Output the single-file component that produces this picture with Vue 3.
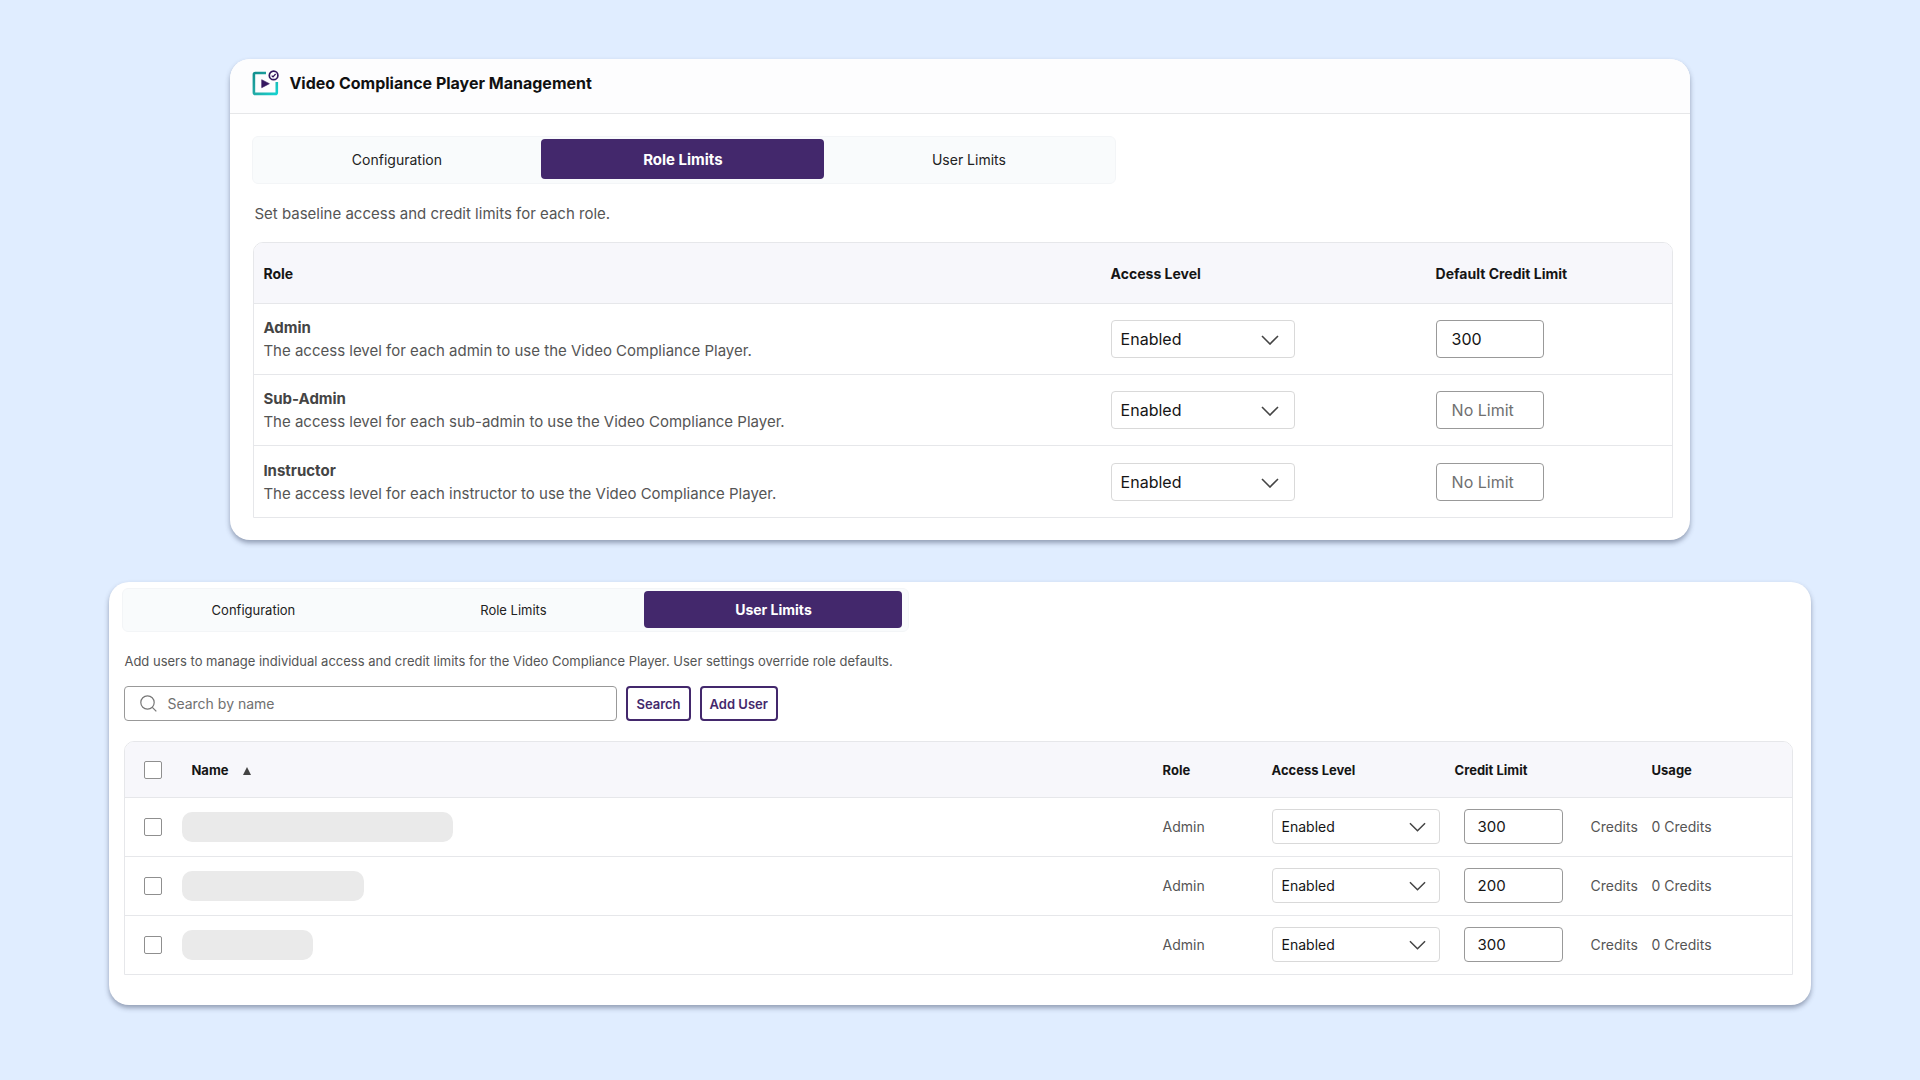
<script setup>
import { reactive, ref } from 'vue'

const tabs = ['Configuration', 'Role Limits', 'User Limits']
const accessOptions = ['Enabled', 'Disabled']

const roles = reactive([
  { name: 'Admin', noun: 'admin', access: 'Enabled', limit: '300' },
  { name: 'Sub-Admin', noun: 'sub-admin', access: 'Enabled', limit: '' },
  { name: 'Instructor', noun: 'instructor', access: 'Enabled', limit: '' },
])

const users = reactive([
  { id: 1, nameWidth: 271, role: 'Admin', access: 'Enabled', limit: '300', used: 0, selected: false },
  { id: 2, nameWidth: 182, role: 'Admin', access: 'Enabled', limit: '200', used: 0, selected: false },
  { id: 3, nameWidth: 131, role: 'Admin', access: 'Enabled', limit: '300', used: 0, selected: false },
])

const query = ref('')
const allSelected = ref(false)

function toggleAll() {
  users.forEach((user) => { user.selected = allSelected.value })
}
</script>

<template>
  <main class="page">
    <section class="panel role-panel">
      <header class="panel-header">
        <svg class="logo" viewBox="0 0 28 26" aria-hidden="true">
          <defs>
            <linearGradient id="frame" x1="0" y1="0" x2="1" y2="1">
              <stop offset="0" stop-color="#12908f" />
              <stop offset="0.5" stop-color="#22aaa6" />
              <stop offset="1" stop-color="#14d3d0" />
            </linearGradient>
          </defs>
          <path d="M14 3H3.3Q1.9 3 1.9 4.4V22.4Q1.9 23.9 3.3 23.9H23.4Q24.8 23.9 24.8 22.4V12" fill="none" stroke="url(#frame)" stroke-width="2.6" />
          <path d="M9.7 9.7V17.7L17.4 13.7Z" fill="#35185f" stroke="#35185f" stroke-width="0.6" stroke-linejoin="round" />
          <circle cx="21.6" cy="5.4" r="4.3" fill="#fff" stroke="#35185f" stroke-width="1.7" />
          <path d="M19.7 5.6L21 6.9L23.6 4" fill="none" stroke="#35185f" stroke-width="1.3" />
        </svg>
        <h1>Video Compliance Player Management</h1>
      </header>

      <div class="panel-body">
        <nav class="tabs" aria-label="Role limit sections">
          <button v-for="tab in tabs" :key="tab" type="button" class="tab" :class="{ active: tab === 'Role Limits' }">{{ tab }}</button>
        </nav>
        <p class="intro">Set baseline access and credit limits for each role.</p>

        <table class="grid">
          <colgroup>
            <col />
            <col class="col-access" />
            <col class="col-limit" />
          </colgroup>
          <thead>
            <tr>
              <th scope="col">Role</th>
              <th scope="col">Access Level</th>
              <th scope="col">Default Credit Limit</th>
            </tr>
          </thead>
          <tbody>
            <tr v-for="role in roles" :key="role.name">
              <td>
                <strong class="role-name">{{ role.name }}</strong>
                <span class="role-text">The access level for each {{ role.noun }} to use the Video Compliance Player.</span>
              </td>
              <td>
                <span class="select">
                  <select v-model="role.access" :aria-label="`${role.name} access level`">
                    <option v-for="option in accessOptions" :key="option">{{ option }}</option>
                  </select>
                  <svg class="chevron" viewBox="0 0 18 10" aria-hidden="true"><path d="M1 1L9 9L17 1" /></svg>
                </span>
              </td>
              <td>
                <input v-model="role.limit" class="limit" type="text" placeholder="No Limit" :aria-label="`${role.name} default credit limit`" />
              </td>
            </tr>
          </tbody>
        </table>
      </div>
    </section>

    <section class="panel user-panel">
      <nav class="tabs" aria-label="User limit sections">
        <button v-for="tab in tabs" :key="tab" type="button" class="tab" :class="{ active: tab === 'User Limits' }">{{ tab }}</button>
      </nav>
      <p class="intro">Add users to manage individual access and credit limits for the Video Compliance Player. User settings override role defaults.</p>

      <form class="toolbar" @submit.prevent>
        <label class="search">
          <svg viewBox="0 0 17 17" aria-hidden="true">
            <circle cx="7.5" cy="7.5" r="6.7" />
            <path d="M12.3 12.3L16.3 16.3" />
          </svg>
          <input v-model="query" type="text" placeholder="Search by name" aria-label="Search by name" />
        </label>
        <button type="submit" class="action">Search</button>
        <button type="button" class="action">Add User</button>
      </form>

      <table class="grid">
        <colgroup>
          <col class="col-check" />
          <col />
          <col class="col-role" />
          <col class="col-access" />
          <col class="col-limit" />
          <col class="col-usage" />
        </colgroup>
        <thead>
          <tr>
            <th scope="col" class="check"><input v-model="allSelected" type="checkbox" aria-label="Select all users" @change="toggleAll" /></th>
            <th scope="col" class="name-head">Name<svg class="sort" viewBox="0 0 8 8" aria-hidden="true"><path d="M4 0L8 8H0Z" /></svg></th>
            <th scope="col">Role</th>
            <th scope="col">Access Level</th>
            <th scope="col">Credit Limit</th>
            <th scope="col">Usage</th>
          </tr>
        </thead>
        <tbody>
          <tr v-for="user in users" :key="user.id">
            <td class="check"><input v-model="user.selected" type="checkbox" :aria-label="`Select user ${user.id}`" /></td>
            <td><span class="masked" :style="{ width: user.nameWidth + 'px' }"></span></td>
            <td class="value">{{ user.role }}</td>
            <td class="value">
              <span class="select">
                <select v-model="user.access" :aria-label="`User ${user.id} access level`">
                  <option v-for="option in accessOptions" :key="option">{{ option }}</option>
                </select>
                <svg class="chevron" viewBox="0 0 18 10" aria-hidden="true"><path d="M1 1L9 9L17 1" /></svg>
              </span>
            </td>
            <td class="value">
              <label class="credits"><input v-model="user.limit" class="limit" type="text" /><span>Credits</span></label>
            </td>
            <td class="value">{{ user.used }} Credits</td>
          </tr>
        </tbody>
      </table>
    </section>
  </main>
</template>

<style>
html {
  background: #e0edff;
}

body {
  margin: 0;
}
</style>

<style scoped>
.page,
.page * {
  box-sizing: border-box;
}

.page {
  display: flex;
  flex-direction: column;
  align-items: center;
  gap: 42px;
  min-height: 100vh;
  padding: 59px 0 48px;
  background: #e0edff;
  color: #555;
  font-family: Inter, "Liberation Sans", sans-serif;
}

.page button,
.page input,
.page select {
  margin: 0;
  font: inherit;
}

.panel {
  overflow: clip;
  border-radius: 20px;
  background: #fff;
  box-shadow: 0 3px 5px rgba(50, 62, 90, 0.45);
}

.role-panel {
  width: 76%;
  font-size: 15px;
}

.user-panel {
  width: 88.6%;
  padding: 6px 18px 30px 13px;
  font-size: 14px;
}

.panel-header {
  display: flex;
  align-items: center;
  gap: 9px;
  padding: 11px 22px 17px;
  border-bottom: 1px solid #e6e7e9;
  background: #fdfdfe;
}

.logo {
  width: 28px;
  height: 26px;
}

h1 {
  margin: 0;
  color: #111;
  font-size: 16px;
  font-weight: 700;
  line-height: 24px;
}

.panel-body {
  padding: 22px 17px 22px 22px;
}

.tabs {
  display: grid;
  grid-template-columns: repeat(3, 1fr);
  border: 1px solid #f3f5f7;
  border-radius: 6px;
  background: #f9fbfc;
}

.role-panel .tabs {
  gap: 3px;
  max-width: 864px;
  height: 48px;
  padding: 2px 5px 4px 2px;
}

.user-panel .tabs {
  gap: 2px;
  max-width: 787px;
  height: 44px;
  padding: 2px 6px 3px 1px;
}

.page .tab {
  padding: 0;
  border: 0;
  border-radius: 4px;
  background: transparent;
  color: #222;
}

.role-panel .tab {
  font-size: 14px;
}

.user-panel .tab {
  font-size: 13px;
}

.page .tab.active {
  background: #43286c;
  color: #fff;
  font-weight: 700;
}

.role-panel .tab.active {
  font-size: 15px;
}

.user-panel .tab.active {
  font-size: 14px;
}

.intro {
  margin: 20px 0 18px 2px;
  line-height: 20px;
}

.user-panel .intro {
  margin: 19px 0 15px 2px;
  font-size: 13px;
}

.grid {
  width: calc(100% - 2px);
  margin-left: 2px;
  table-layout: fixed;
  border: 1px solid #e6e7ea;
  border-spacing: 0;
  border-radius: 10px 10px 0 0;
}

.role-panel .grid {
  width: calc(100% - 1px);
  margin-left: 1px;
}

th,
td {
  padding: 0;
  border-bottom: 1px solid #e6e7ea;
  text-align: left;
  vertical-align: middle;
}

tbody tr:last-child td {
  border-bottom: 0;
}

th {
  background: #f7f7fb;
  color: #151515;
  font-weight: 700;
}

th:first-child {
  border-top-left-radius: 9px;
}

th:last-child {
  border-top-right-radius: 9px;
}

.role-panel th {
  height: 61px;
  font-size: 14px;
}

.role-panel td {
  height: 71px;
}

.role-panel th,
.role-panel td {
  padding-left: 9px;
}

.role-panel .col-access {
  width: 325px;
}

.role-panel .col-limit {
  width: 245px;
}

.role-name,
.role-text {
  display: block;
  line-height: 23px;
}

.role-name {
  color: #444;
  font-weight: 700;
}

.select {
  position: relative;
  display: block;
  width: 184px;
  height: 38px;
}

select {
  width: 100%;
  height: 100%;
  padding: 0 9px;
  border: 1px solid #d9d9d9;
  border-radius: 4px;
  background: #fff;
  color: #151515;
  appearance: none;
}

.role-panel select,
.role-panel .limit {
  font-size: 16px;
}

.chevron {
  position: absolute;
  top: 50%;
  right: 16px;
  width: 18px;
  height: 10px;
  margin-top: -4px;
  fill: none;
  stroke: #444;
  stroke-width: 1.6;
  pointer-events: none;
}

.limit {
  display: block;
  width: 108px;
  height: 38px;
  padding: 0 15px;
  border: 1px solid #999;
  border-radius: 4px;
  background: #fff;
  color: #151515;
}

input::placeholder {
  color: #707070;
  opacity: 1;
}

.toolbar {
  display: flex;
  gap: 9px;
  height: 35px;
  margin: 0 0 20px 2px;
}

.search {
  display: flex;
  align-items: center;
  gap: 10px;
  width: 493px;
  padding: 0 15px;
  border: 1px solid #999;
  border-radius: 4px;
}

.search svg {
  width: 17px;
  height: 17px;
  fill: none;
  stroke: #777;
  stroke-width: 1.2;
}

.search input {
  flex: 1;
  min-width: 0;
  padding: 0;
  border: 0;
  outline: 0;
  background: transparent;
}

.page .action {
  padding: 0 8px;
  border: 2px solid #43286c;
  border-radius: 4px;
  background: #fff;
  color: #43286c;
  font-size: 13px;
  font-weight: 600;
}

.user-panel th {
  height: 56px;
  font-size: 13px;
}

.user-panel td {
  height: 59px;
}

.user-panel tr:last-child td {
  height: 58px;
}

.user-panel .value {
  padding-bottom: 2px;
}

.user-panel .col-check {
  width: 57px;
}

.user-panel .col-role {
  width: 109px;
}

.user-panel .col-access {
  width: 183px;
}

.user-panel .col-limit {
  width: 197px;
}

.user-panel .col-usage {
  width: 140px;
}

.user-panel .check {
  padding-left: 19px;
}

.user-panel .name-head {
  padding-left: 9px;
}

.sort {
  width: 8px;
  height: 8px;
  margin-left: 14px;
  fill: #444;
}

.check input {
  display: block;
  width: 18px;
  height: 18px;
  border: 1px solid #8f8f8f;
  border-radius: 2px;
  background: #fff;
  appearance: none;
}

.check input:checked {
  background: #43286c;
}

.masked {
  display: block;
  height: 30px;
  border-radius: 10px;
  background: #eaeaea;
}

.user-panel .select {
  width: 168px;
  height: 35px;
}

.user-panel .limit {
  font-size: 15px;
}

.user-panel .chevron {
  right: 14px;
  width: 17px;
}

.credits {
  display: flex;
  align-items: center;
  gap: 28px;
  padding-left: 9px;
}

.user-panel .limit {
  width: 99px;
  height: 35px;
  padding: 0 13px;
}
</style>
